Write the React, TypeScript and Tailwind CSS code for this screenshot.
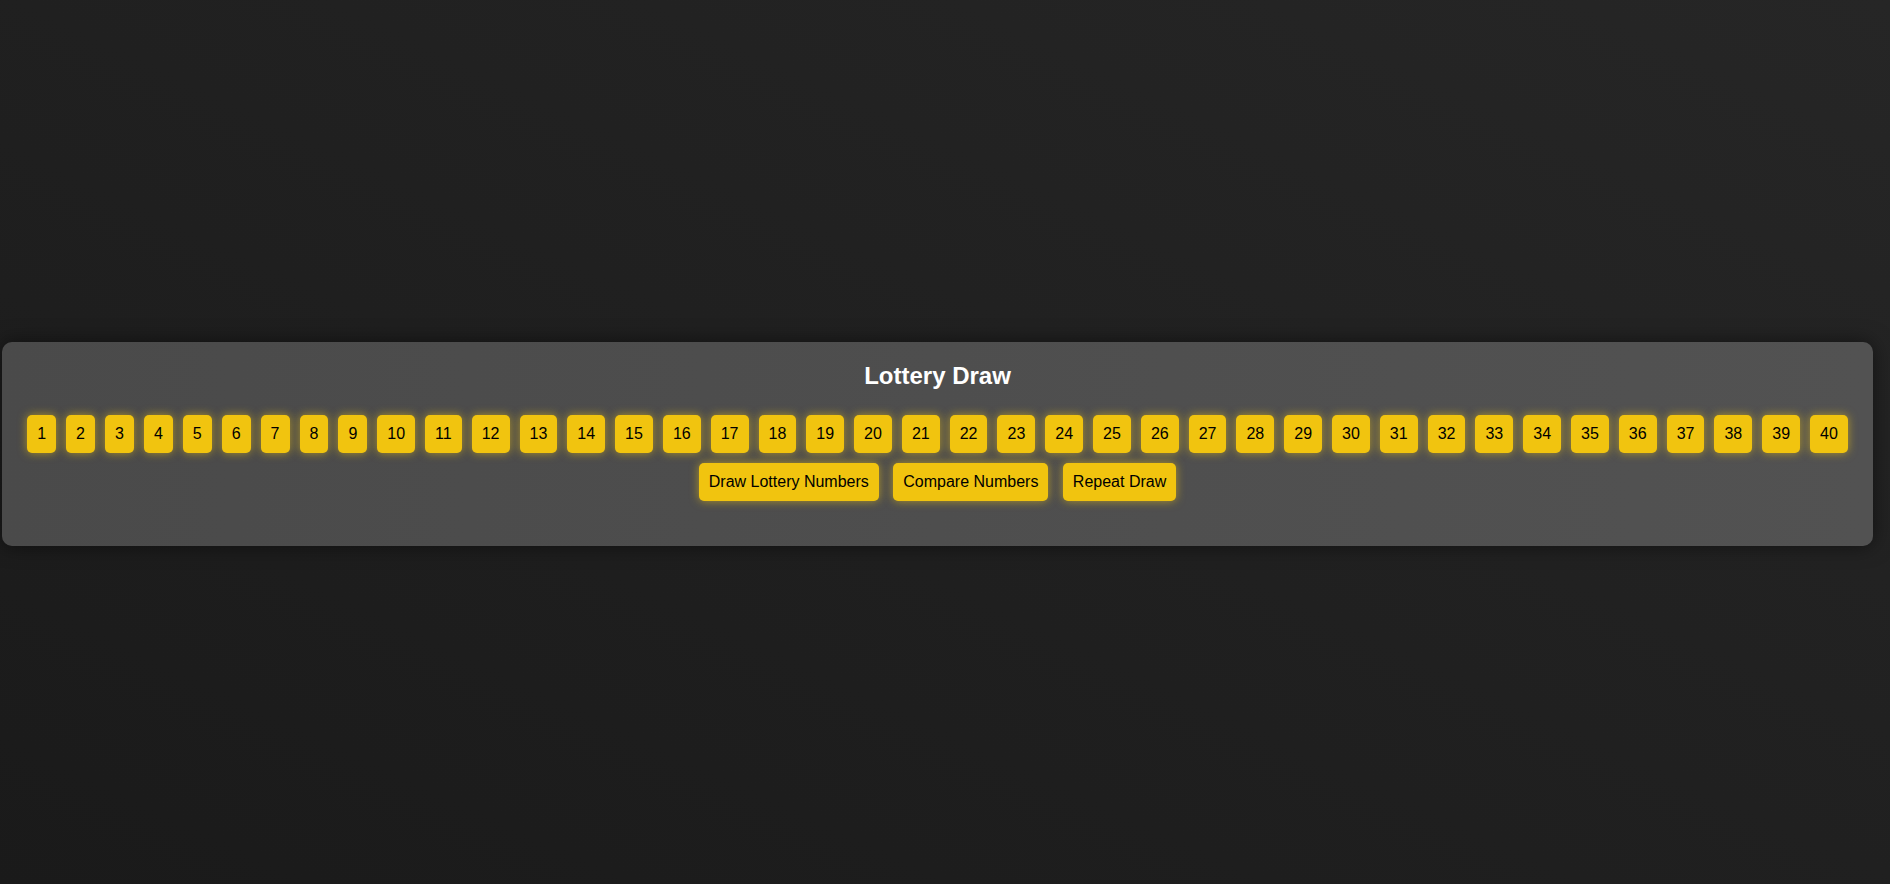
import React from "react";

export default function App() {
  const nums = Array.from({ length: 40 }, (_, i) => i + 1);
  const buttons = ["Draw Lottery Numbers", "Compare Numbers", "Repeat Draw"];
  return (
    <div
      className="min-h-screen w-full flex items-center justify-center pr-[15px] pt-[3px] bg-linear-to-tr from-[#1a1a1a] to-[#262626]"
      style={{ fontFamily: '"Liberation Sans", Arial, sans-serif' }}
    >
      <div className="shrink-0 rounded-[10px] bg-linear-to-r from-[#4a4a4a] to-[#525252] p-5 text-center shadow-[0_0_20px_rgba(0,0,0,0.5)]">
        <h2 className="m-0 mb-5 text-[24px] font-bold leading-[normal] text-white">
          Lottery Draw
        </h2>
        <div className="flex justify-center">
          {nums.map((n) => (
            <div
              key={n}
              className="m-[5px] rounded-[5px] bg-[#f1c40f] p-[10px] text-[16px] leading-[normal] text-black shadow-[0_0_10px_rgba(241,196,15,0.6)]"
            >
              {n}
            </div>
          ))}
        </div>
        <div className="mb-5 flex justify-center gap-[4.45px]">
          {buttons.map((b) => (
            <button
              key={b}
              className="m-[5px] cursor-pointer rounded-[5px] border-0 bg-[#f1c40f] p-[10px] text-[16px] leading-[normal] text-black shadow-[0_0_10px_rgba(241,196,15,0.6)]"
            >
              {b}
            </button>
          ))}
        </div>
      </div>
    </div>
  );
}
